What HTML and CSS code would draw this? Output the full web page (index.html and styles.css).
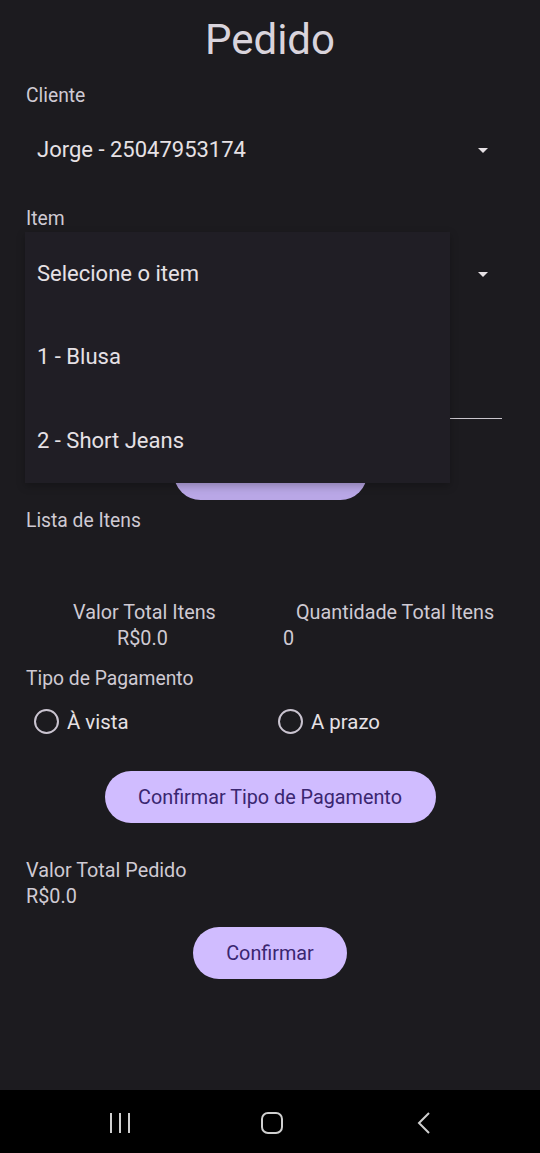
FILE: index.html
```html
<!DOCTYPE html>
<html lang="pt-BR">
<head>
<meta charset="utf-8">
<title>Pedido</title>
<link rel="stylesheet" href="styles.css">
</head>
<body>
<div class="screen">
  <h1 class="title">Pedido</h1>

  <div class="label label-cliente">Cliente</div>
  <div class="spinner spinner-cliente">
    <span class="spinner-text">Jorge - 25047953174</span>
    <svg class="arrow" width="10" height="5" viewBox="0 0 10 5"><path d="M0 0h10L5 5z" fill="#e6e1e5"/></svg>
  </div>

  <div class="label label-item">Item</div>
  <div class="spinner spinner-item">
    <span class="spinner-text">Selecione o item</span>
    <svg class="arrow" width="10" height="5" viewBox="0 0 10 5"><path d="M0 0h10L5 5z" fill="#e6e1e5"/></svg>
  </div>

  <div class="textfield"></div>
  <div class="btn btn-add" aria-label="Adicionar item"></div>

  <div class="label label-lista">Lista de Itens</div>
  <div class="list"></div>

  <div class="totals">
    <div class="t-head t-valor">Valor Total Itens</div>
    <div class="t-head t-qtd">Quantidade Total Itens</div>
    <div class="t-val t-valor-v">R$0.0</div>
    <div class="t-val t-qtd-v">0</div>
  </div>

  <div class="label label-tipo">Tipo de Pagamento</div>
  <div class="radios">
    <label class="radio"><span class="circle"></span><span class="radio-text">À vista</span></label>
    <label class="radio"><span class="circle"></span><span class="radio-text">A prazo</span></label>
  </div>

  <button class="btn btn-tipo">Confirmar Tipo de Pagamento</button>

  <div class="pedido-total">
    <div class="pt-label">Valor Total Pedido</div>
    <div class="pt-value">R$0.0</div>
  </div>

  <button class="btn btn-confirmar">Confirmar</button>

  <ul class="menu">
    <li class="menu-item">Selecione o item</li>
    <li class="menu-item">1 - Blusa</li>
    <li class="menu-item">2 - Short Jeans</li>
  </ul>
</div>
<nav class="navbar">
  <svg class="nav-icon" width="22" height="22" viewBox="0 0 22 22"><path d="M2 1v20M11 1v20M20 1v20" stroke="#cfcfcf" stroke-width="2" fill="none"/></svg>
  <svg class="nav-icon" width="24" height="22" viewBox="0 0 24 22"><rect x="2" y="1" width="20" height="20" rx="6" stroke="#cfcfcf" stroke-width="2" fill="none"/></svg>
  <svg class="nav-icon" width="16" height="22" viewBox="0 0 16 22"><path d="M13 1L3 11l10 10" stroke="#cfcfcf" stroke-width="2" fill="none"/></svg>
</nav>
</body>
</html>
```

FILE: styles.css
```css
* { box-sizing: border-box; }
html, body { margin: 0; padding: 0; }
body {
  background: #1c1b1f;
  font-family: Roboto, "Noto Sans", sans-serif;
  color: #e6e1e5;
  width: 540px;
  height: 1153px;
  overflow: hidden;
}
.screen {
  position: relative;
  height: 1090px;
  padding: 0 26px;
  display: flex;
  flex-direction: column;
}
.title {
  margin: 0;
  height: 80px;
  line-height: 80px;
  font-size: 42px;
  font-weight: 400;
  text-align: center;
  color: #d9d4dc;
}
.label {
  height: 30px;
  line-height: 30px;
  font-size: 19.3px;
  color: #cfcad3;
}
.label-cliente { margin-top: 1px; }
.label-item { margin-top: 26px; }
.label-lista { margin-top: 6px; }
.label-tipo { margin-top: 12px; }

.spinner {
  height: 56px;
  display: flex;
  align-items: center;
  justify-content: space-between;
  padding: 0 26px 0 11px;
}
.spinner-cliente { margin-top: 11px; }
.spinner-item { margin-top: 12px; }
.spinner-text {
  font-size: 22px;
  line-height: 56px;
  color: #e6e1e5;
}
.arrow { display: block; }

.textfield {
  margin: 56px 12px 0;
  height: 61px;
  border-bottom: 1px solid #c9c5cc;
}

.btn {
  border: 0;
  border-radius: 27px;
  background: #d0bcff;
  color: #3a2670;
  font-family: inherit;
  font-size: 19.8px;
  height: 53px;
  align-self: center;
  padding: 0;
}
.btn-add {
  margin-top: 28px;
  width: 193px;
  background: #b9a7e6;
}
.list { height: 64px; }

.totals {
  display: grid;
  grid-template-columns: 257px 1fr;
  font-size: 19.8px;
  line-height: 26px;
  color: #cfcad3;
}
.t-valor { padding-left: 47px; }
.t-qtd { padding-left: 13px; }
.t-valor-v { padding-left: 91px; }
.t-qtd-v { padding-left: 0; }

.radios {
  margin-top: 3px;
  height: 48px;
  display: flex;
  padding-left: 8px;
}
.radio {
  flex: none;
  width: 244px;
  display: flex;
  align-items: center;
  gap: 8px;
}
.circle {
  width: 25px;
  height: 25px;
  border: 2.5px solid #cac4d0;
  border-radius: 50%;
  flex: none;
}
.radio-text {
  font-size: 20.4px;
  color: #e6e1e5;
  padding-top: 2px;
}

.btn-tipo {
  margin-top: 26px;
  width: 331px;
  height: 52px;
}

.pedido-total {
  margin-top: 35px;
  font-size: 19.8px;
  line-height: 26px;
  color: #cfcad3;
}

.btn-confirmar {
  margin-top: 17px;
  width: 154px;
  height: 52px;
}

.menu {
  position: absolute;
  left: 25px;
  top: 232px;
  width: 425px;
  height: 251px;
  margin: 0;
  padding: 0;
  list-style: none;
  background: #201e25;
  box-shadow: 0 3px 8px rgba(0, 0, 0, 0.25);
}
.menu-item {
  height: 84px;
  line-height: 84px;
  padding-left: 12px;
  font-size: 22px;
  color: #e6e1e5;
}
.menu-item:first-child { height: 83px; line-height: 83px; }

.navbar {
  height: 63px;
  background: #000;
  display: flex;
  align-items: center;
  padding-top: 2px;
}
.nav-icon { display: block; }
.nav-icon:nth-child(1) { margin-left: 109px; }
.nav-icon:nth-child(2) { margin-left: 129px; }
.nav-icon:nth-child(3) { margin-left: 132px; }
```
